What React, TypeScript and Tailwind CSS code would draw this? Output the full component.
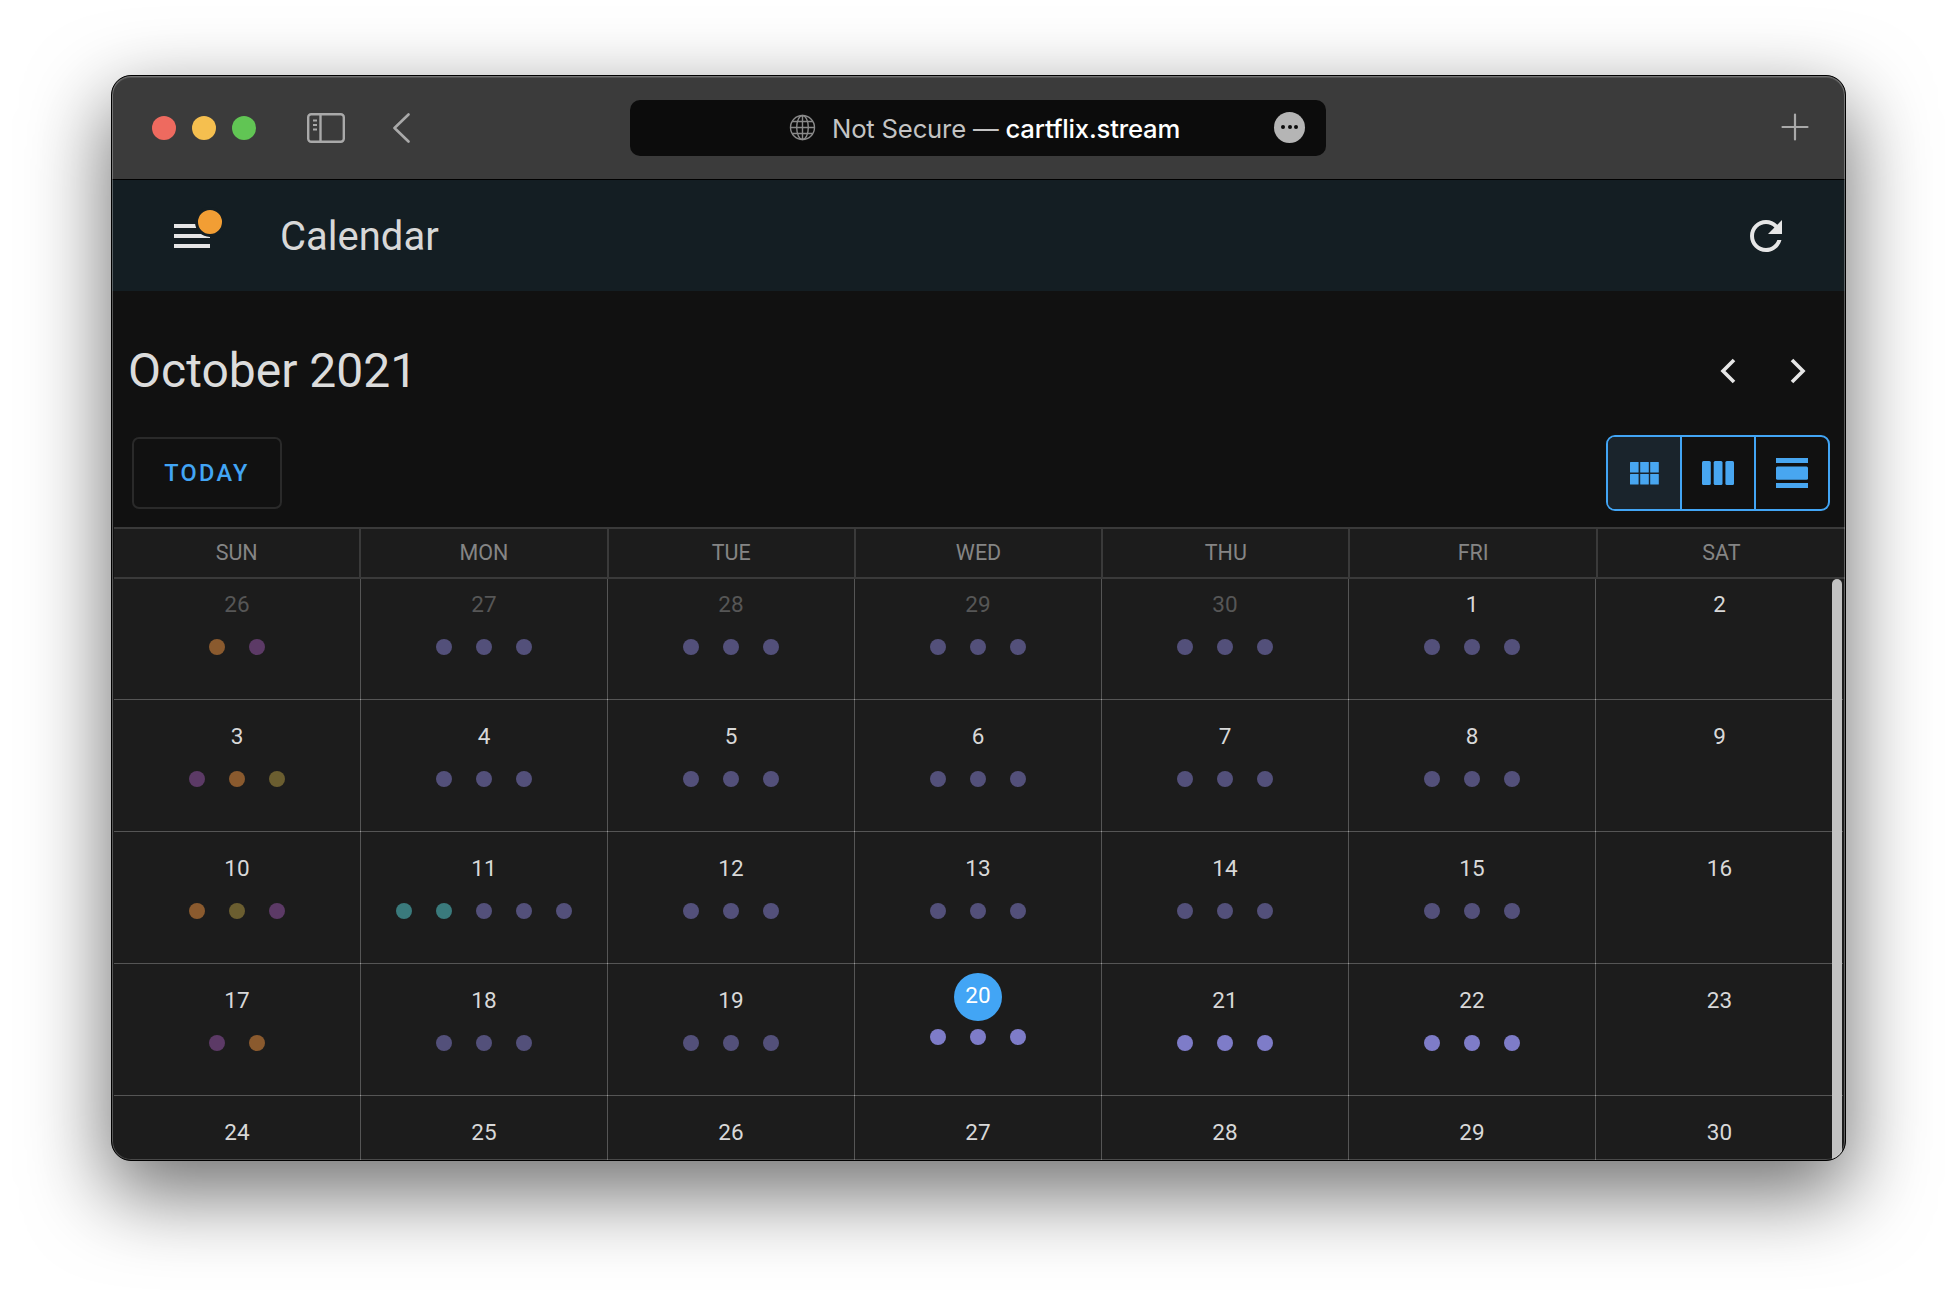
import React from "react";

type Cell = { n: number; dots: string[]; dim?: boolean; today?: boolean };

const B = "bg-[#53507a]";
const H = "bg-[#7e7cc8]";
const O = "bg-[#8a5a2e]";
const P = "bg-[#5c3a66]";
const L = "bg-[#6b5e30]";
const T = "bg-[#3a7a7c]";

const rows: Cell[][] = [
  [
    { n: 26, dim: true, dots: [O, P] },
    { n: 27, dim: true, dots: [B, B, B] },
    { n: 28, dim: true, dots: [B, B, B] },
    { n: 29, dim: true, dots: [B, B, B] },
    { n: 30, dim: true, dots: [B, B, B] },
    { n: 1, dots: [B, B, B] },
    { n: 2, dots: [] },
  ],
  [
    { n: 3, dots: [P, O, L] },
    { n: 4, dots: [B, B, B] },
    { n: 5, dots: [B, B, B] },
    { n: 6, dots: [B, B, B] },
    { n: 7, dots: [B, B, B] },
    { n: 8, dots: [B, B, B] },
    { n: 9, dots: [] },
  ],
  [
    { n: 10, dots: [O, L, P] },
    { n: 11, dots: [T, T, B, B, B] },
    { n: 12, dots: [B, B, B] },
    { n: 13, dots: [B, B, B] },
    { n: 14, dots: [B, B, B] },
    { n: 15, dots: [B, B, B] },
    { n: 16, dots: [] },
  ],
  [
    { n: 17, dots: [P, O] },
    { n: 18, dots: [B, B, B] },
    { n: 19, dots: [B, B, B] },
    { n: 20, today: true, dots: [H, H, H] },
    { n: 21, dots: [H, H, H] },
    { n: 22, dots: [H, H, H] },
    { n: 23, dots: [] },
  ],
  [
    { n: 24, dots: [] },
    { n: 25, dots: [] },
    { n: 26, dots: [] },
    { n: 27, dots: [] },
    { n: 28, dots: [] },
    { n: 29, dots: [] },
    { n: 30, dots: [] },
  ],
];

const days = ["SUN", "MON", "TUE", "WED", "THU", "FRI", "SAT"];

function Dots({ dots, className }: { dots: string[]; className: string }) {
  return (
    <div className={`flex gap-[24px] h-[16px] ${className}`}>
      {dots.map((d, i) => (
        <span key={i} className={`w-[16px] h-[16px] rounded-full ${d}`} />
      ))}
    </div>
  );
}

function DayCell({ c, last }: { c: Cell; last: boolean }) {
  return (
    <div
      className={`relative flex flex-col items-center border-b border-[#555555] ${
        last ? "" : "border-r after:absolute after:right-[-1px] after:bottom-[-1px] after:w-px after:h-px after:bg-[#9a9a9a]"
      }`}
    >
      {c.today ? (
        <>
          <div className="mt-[9px] w-[48px] h-[48px] rounded-full bg-[#42a5f5] flex items-center justify-center text-[22.5px] text-white pb-[2px]">
            {c.n}
          </div>
          <Dots dots={c.dots} className="mt-[8px]" />
        </>
      ) : (
        <>
          <div
            className={`mt-[22px] h-[28px] leading-[28px] text-[22.5px] ${
              c.dim ? "text-[#565656]" : "text-[#d8d8d8]"
            }`}
          >
            {c.n}
          </div>
          <Dots dots={c.dots} className="mt-[21px]" />
        </>
      )}
    </div>
  );
}

export default function App() {
  return (
    <div className="h-[1308px] w-[1958px] bg-white pt-[75px] pl-[111px] overflow-hidden [font-family:Roboto,sans-serif]">
      <div className="relative w-[1735px] h-[1086px] rounded-[20px] border border-black bg-[#111111] overflow-hidden shadow-[0_30px_80px_4px_rgba(0,0,0,0.55)] flex flex-col">
        {/* Title bar */}
        <div className="h-[104px] shrink-0 bg-[#3b3b3b] border-b border-black flex items-center relative">
          <div className="flex gap-[16px] ml-[40px]">
            <span className="w-[24px] h-[24px] rounded-full bg-[#ee6a5f]" />
            <span className="w-[24px] h-[24px] rounded-full bg-[#f5bf4f]" />
            <span className="w-[24px] h-[24px] rounded-full bg-[#61c554]" />
          </div>
          <svg className="ml-[51px]" width="38" height="30" viewBox="0 0 38 30" fill="none" stroke="#a9a9a9" strokeWidth="2.4">
            <rect x="1.2" y="1.2" width="35.6" height="27.6" rx="3" />
            <path d="M13.5 1.5V28.5" />
            <path d="M6 7.5H10M6 12H10M6 16.5H10" strokeWidth="2" />
          </svg>
          <svg className="ml-[47px]" width="19" height="30" viewBox="0 0 19 30" fill="none" stroke="#a9a9a9" strokeWidth="2.6" strokeLinecap="round" strokeLinejoin="round">
            <path d="M16.5 1.5L2.5 15L16.5 28.5" />
          </svg>
          <div className="ml-[219px] w-[696px] h-[56px] rounded-[10px] bg-[#0c0c0c] flex items-center relative [font-family:Inter,sans-serif]">
            <svg className="ml-[159px]" width="27" height="27" viewBox="0 0 27 27" fill="none" stroke="#8a8a8a" strokeWidth="1.4">
              <circle cx="13.5" cy="13.5" r="12" />
              <ellipse cx="13.5" cy="13.5" rx="5.8" ry="12" />
              <path d="M13.5 1.5V25.5M1.5 13.5H25.5M3.2 7.5H23.8M3.2 19.5H23.8" />
            </svg>
            <div className="ml-[16px] text-[25.7px] tracking-[-0.2px] text-[#c4c4c4] whitespace-nowrap mt-[3px]">
              Not Secure — <span className="text-white font-medium">cartflix.stream</span>
            </div>
            <div className="absolute left-[644px] top-[12px] w-[31px] h-[31px] rounded-full bg-[#b5b5b5] flex items-center justify-center gap-[2.5px]">
              <span className="w-[4px] h-[4px] rounded-full bg-[#0c0c0c]" />
              <span className="w-[4px] h-[4px] rounded-full bg-[#0c0c0c]" />
              <span className="w-[4px] h-[4px] rounded-full bg-[#0c0c0c]" />
            </div>
          </div>
          <svg className="ml-auto mr-[36px] mt-[-1px]" width="28" height="28" viewBox="0 0 28 28" fill="none" stroke="#a9a9a9" strokeWidth="2.2" strokeLinecap="round">
            <path d="M14 1.5V26.5M1.5 14H26.5" />
          </svg>
        </div>

        {/* App bar */}
        <div className="h-[111px] shrink-0 bg-[#141e23] flex items-center">
          <div className="relative ml-[62px] w-[36px] h-[24px] flex flex-col justify-between">
            <span className="h-[4px] bg-[#e6e6e6]" />
            <span className="h-[4px] bg-[#e6e6e6]" />
            <span className="h-[4px] bg-[#e6e6e6]" />
            <span className="absolute left-[21px] top-[-17px] w-[30px] h-[30px] rounded-full bg-[#f29e34] border-[3px] border-[#141e23]" />
          </div>
          <div className="ml-[70px] text-[40px] text-[#d8d8d8] leading-none mt-[2px]">Calendar</div>
          <svg className="ml-auto mr-[55px]" width="48" height="48" viewBox="0 0 24 24" fill="#e6e6e6">
            <path d="M17.65 6.35C16.2 4.9 14.21 4 12 4c-4.42 0-7.99 3.58-7.99 8s3.57 8 7.99 8c3.73 0 6.84-2.55 7.73-6h-2.08c-.82 2.33-3.04 4-5.65 4-3.31 0-6-2.69-6-6s2.69-6 6-6c1.66 0 3.14.69 4.22 1.78L13 11h7V4l-2.35 2.35z" />
          </svg>
        </div>

        {/* Month title */}
        <div className="pt-[42px] h-[118px] shrink-0 flex items-center pl-[16px]">
          <div className="text-[48px] leading-[76px] text-[#dcdcdc]">October 2021</div>
          <div className="ml-auto flex items-center gap-[48px] mr-[36px]">
            <svg width="22" height="26" viewBox="0 0 22 26" fill="none" stroke="#e6e6e6" strokeWidth="3.6">
              <path d="M17 2L6 13L17 24" />
            </svg>
            <svg width="22" height="26" viewBox="0 0 22 26" fill="none" stroke="#e6e6e6" strokeWidth="3.6">
              <path d="M5 2L16 13L5 24" />
            </svg>
          </div>
        </div>

        {/* Toolbar */}
        <div className="shrink-0 flex items-start justify-between pt-[26px] pb-[16px] pl-[20px] pr-[15px]">
          <button className="mt-[2px] w-[150px] h-[72px] pt-[2px] rounded-[7px] border-2 border-[#2a2a2a] text-[23.5px] font-medium tracking-[0.1em] text-[#42a5f5]">
            TODAY
          </button>
          <div className="w-[224px] h-[76px] rounded-[9px] border-2 border-[#42a5f5] flex overflow-hidden">
            <div className="w-[74px] bg-[#1a242c] border-r-2 border-[#42a5f5] flex items-center justify-center">
              <svg width="29" height="23" viewBox="0 0 29 23" fill="#48a6f0">
                <rect x="0" y="0" width="8.6" height="10.4" rx="0.5" />
                <rect x="10.2" y="0" width="8.6" height="10.4" rx="0.5" />
                <rect x="20.2" y="0" width="8.6" height="10.4" rx="0.5" />
                <rect x="0" y="12" width="8.6" height="10.4" rx="0.5" />
                <rect x="10.2" y="12" width="8.6" height="10.4" rx="0.5" />
                <rect x="20.2" y="12" width="8.6" height="10.4" rx="0.5" />
              </svg>
            </div>
            <div className="w-[74px] border-r-2 border-[#42a5f5] flex items-center justify-center">
              <svg width="32" height="24" viewBox="0 0 32 24" fill="#48a6f0">
                <rect x="0" y="0" width="8.8" height="24" rx="1.5" />
                <rect x="11.7" y="0" width="8.8" height="24" rx="1.5" />
                <rect x="23.4" y="0" width="8.6" height="24" rx="1.5" />
              </svg>
            </div>
            <div className="flex-1 flex items-center justify-center">
              <svg width="32" height="30" viewBox="0 0 32 30" fill="#48a6f0">
                <rect x="0" y="0" width="32" height="5" />
                <rect x="0" y="8.4" width="32" height="13.4" rx="1.5" />
                <rect x="0" y="25" width="32" height="5" />
              </svg>
            </div>
          </div>
        </div>

        {/* Day header */}
        <div className="shrink-0 ml-[2px] h-[52px] bg-[#1c1c1c] border-t-2 border-b-2 border-[#3a3a3a] grid grid-cols-[repeat(7,247.3px)]">
          {days.map((d, i) => (
            <div
              key={d}
              className={`flex items-center justify-center text-[21.5px] text-[#858585] ${
                i < 6 ? "border-r-2 border-[#3a3a3a]" : ""
              }`}
            >
              {d}
            </div>
          ))}
        </div>

        {/* Month grid */}
        <div className="relative flex-1 min-h-0 ml-px bg-[#1c1c1c] overflow-hidden">
          <div className="-mt-[11px] ml-px grid grid-cols-[repeat(7,247px)] auto-rows-[132px]">
            {rows.flat().map((c, i) => (
              <DayCell key={i} c={c} last={i % 7 === 6} />
            ))}
          </div>
          <div className="absolute right-[3px] top-0 bottom-0 w-[10px] rounded-t-full bg-[#c2c2c2]" />
        </div>

        <div className="absolute inset-0 rounded-[19px] pointer-events-none shadow-[inset_0_0_0_1px_rgba(255,255,255,0.2),inset_0_1px_0_1px_rgba(255,255,255,0.12)]" />
      </div>
    </div>
  );
}
